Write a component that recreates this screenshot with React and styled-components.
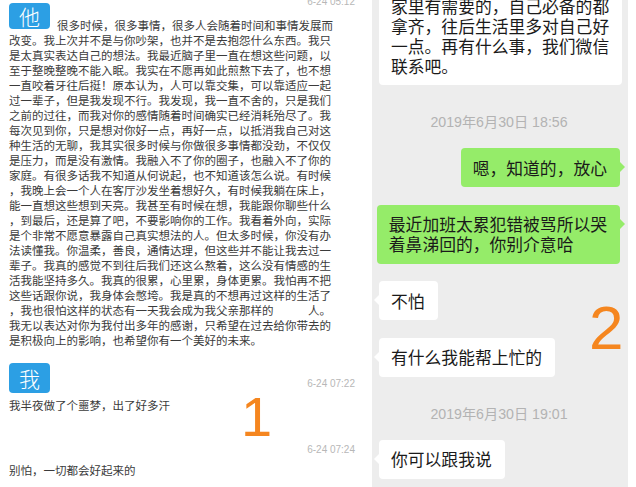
import React from "react";
import styled, { createGlobalStyle } from "styled-components";

const GlobalStyle = createGlobalStyle`
  html, body {
    margin: 0;
    padding: 0;
    background: #ffffff;
  }
`;

const letterLines = [
  "改变。我上次并不是与你吵架，也并不是去抱怨什么东西。我只",
  "是太真实表达自己的想法。我最近脑子里一直在想这些问题，以",
  "至于整晚整晚不能入眠。我实在不愿再如此煎熬下去了，也不想",
  "一直咬着牙往后挺！原本认为，人可以靠交集，可以靠适应一起",
  "过一辈子，但是我发现不行。我发现，我一直不舍的，只是我们",
  "之前的过往，而我对你的感情随着时间确实已经消耗殆尽了。我",
  "每次见到你，只是想对你好一点，再好一点，以抵消我自己对这",
  "种生活的无聊，我其实很多时候与你做很多事情都没劲，不仅仅",
  "是压力，而是没有激情。我融入不了你的圈子，也融入不了你的",
  "家庭。有很多话我不知道从何说起，也不知道该怎么说。有时候",
  "，我晚上会一个人在客厅沙发坐着想好久，有时候我躺在床上，",
  "能一直想这些想到天亮。我甚至有时候在想，我能跟你聊些什么",
  "，到最后，还是算了吧，不要影响你的工作。我看着外向，实际",
  "是个非常不愿意暴露自己真实想法的人。但太多时候，你没有办",
  "法读懂我。你温柔，善良，通情达理，但这些并不能让我去过一",
  "辈子。我真的感觉不到往后我们还这么熬着，这么没有情感的生",
  "活我能坚持多久。我真的很累，心里累，身体更累。我怕再不把",
  "这些话跟你说，我身体会憋垮。我是真的不想再过这样的生活了",
  "，我也很怕这样的状态有一天我会成为我父亲那样的　　　人。",
  "我无以表达对你为我付出多年的感谢，只希望在过去给你带去的",
  "是积极向上的影响，也希望你有一个美好的未来。",
];

const chat = [
  { kind: "stamp", text: "2019年6月30日 18:56" },
  { kind: "me", lines: ["嗯，知道的，放心"] },
  { kind: "me", lines: ["最近加班太累犯错被骂所以哭", "着鼻涕回的，你别介意哈"] },
  { kind: "them", lines: ["不怕"] },
  { kind: "them", lines: ["有什么我能帮上忙的"] },
  { kind: "stamp", text: "2019年6月30日 19:01" },
  { kind: "them", lines: ["你可以跟我说"] },
];

function App() {
  return (
    <>
      <GlobalStyle />
      <Page>
        <LeftPane>
          <Head>
            <Avatar>他</Avatar>
            <HeadLine>很多时候，很多事情，很多人会随着时间和事情发展而</HeadLine>
            <TopStamp>6-24 05:12</TopStamp>
          </Head>
          {letterLines.map((l, i) => (
            <Line key={i}>{l}</Line>
          ))}
          <AvatarRow>
            <Avatar>我</Avatar>
            <Stamp>6-24 07:22</Stamp>
          </AvatarRow>
          <Line $gap="4.5px">我半夜做了个噩梦，出了好多汗</Line>
          <StampRow>
            <Stamp>6-24 07:24</Stamp>
          </StampRow>
          <Line $gap="8px">别怕，一切都会好起来的</Line>
          <Mark $left="241px" $top="389px" $size="56px">1</Mark>
        </LeftPane>

        <RightPane>
          <Bubble $side="left" $noTail $top="-14px">
            家里有需要的，自己必备的都
            <br />
            拿齐，往后生活里多对自己好
            <br />
            一点。再有什么事，我们微信
            <br />
            联系吧。
          </Bubble>
          {chat.map((m, i) =>
            m.kind === "stamp" ? (
              <ChatTime key={i}>{m.text}</ChatTime>
            ) : (
              <Bubble key={i} $side={m.kind === "me" ? "right" : "left"}>
                {m.lines.map((l, j) => (
                  <React.Fragment key={j}>
                    {j > 0 && <br />}
                    {l}
                  </React.Fragment>
                ))}
              </Bubble>
            )
          )}
          <Mark $left="217px" $top="297px" $size="62px">2</Mark>
        </RightPane>
        <Edge />
      </Page>
    </>
  );
}

export default App;

const Page = styled.div`
  display: flex;
  width: 636px;
  height: 487px;
  overflow: hidden;
  background: #ffffff;
  font-family: "Noto Sans CJK SC", "Noto Sans", sans-serif;
`;

const LeftPane = styled.div`
  position: relative;
  width: 372px;
  flex-shrink: 0;
  box-sizing: border-box;
  padding: 0 17px 0 9px;
  display: flex;
  flex-direction: column;
  color: #3b3b3b;
  font-size: 11.5px;
  line-height: 15px;
`;

const Head = styled.div`
  display: grid;
  grid-template-columns: 41px 1fr;
  grid-template-rows: auto;
  column-gap: 7px;
  align-items: end;
`;

const Avatar = styled.div`
  width: 41px;
  height: 26px;
  margin-top: 3px;
  margin-bottom: 3.5px;
  border-radius: 4px;
  background: #2c9fe4;
  color: #ffffff;
  font-size: 21px;
  line-height: 26px;
  font-weight: 300;
  text-align: center;
`;

const Line = styled.div`
  white-space: nowrap;
  margin-top: ${(p) => p.$gap || "0"};
`;

const HeadLine = styled(Line)`
  grid-column: 2;
  grid-row: 1;
`;

const Stamp = styled.div`
  font-family: "Liberation Sans", Arial, sans-serif;
  font-size: 10px;
  line-height: 10px;
  color: #b7b7b7;
`;

const TopStamp = styled(Stamp)`
  grid-column: 2;
  grid-row: 1;
  justify-self: end;
  align-self: start;
  margin-top: -3px;
`;

const AvatarRow = styled.div`
  display: flex;
  justify-content: space-between;
  align-items: flex-end;
  margin-top: 15.5px;

  ${Avatar} {
    margin: 0;
    height: 30px;
    line-height: 30px;
  }
  ${Stamp} {
    margin-bottom: 4px;
  }
`;

const StampRow = styled.div`
  display: flex;
  justify-content: flex-end;
  margin-top: 32px;
`;

const Mark = styled.div`
  position: absolute;
  left: ${(p) => p.$left};
  top: ${(p) => p.$top};
  font-family: "Liberation Sans", Arial, sans-serif;
  font-size: ${(p) => p.$size};
  line-height: 1;
  color: #f5861f;
  pointer-events: none;
`;

const RightPane = styled.div`
  position: relative;
  width: 256px;
  flex-shrink: 0;
  box-sizing: border-box;
  padding: 0 8px 0 6px;
  background: #ededed;
  display: flex;
  flex-direction: column;
  align-items: flex-start;
`;

const Bubble = styled.div`
  position: relative;
  align-self: ${(p) => (p.$side === "right" ? "flex-end" : "flex-start")};
  margin-top: ${(p) => p.$top || "0"};
  margin-bottom: 17.5px;
  margin-left: ${(p) => (p.$side === "right" ? "0" : "1px")};
  padding: 9.5px 13px 9.5px 12px;
  border-radius: 4px;
  background: ${(p) => (p.$side === "right" ? "#95ec69" : "#ffffff")};
  color: #1a1a1a;
  font-size: 16.8px;
  line-height: 20px;
  white-space: nowrap;

  &::before {
    content: "";
    display: ${(p) => (p.$noTail ? "none" : "block")};
    position: absolute;
    top: 14px;
    ${(p) => (p.$side === "right" ? "right: -5px;" : "left: -5px;")}
    border-top: 5px solid transparent;
    border-bottom: 5px solid transparent;
    ${(p) =>
      p.$side === "right"
        ? "border-left: 5px solid #95ec69;"
        : "border-right: 5px solid #ffffff;"}
  }
`;

const ChatTime = styled.div`
  align-self: center;
  margin: 9.5px 0 16px;
  font-family: "Liberation Sans", "Noto Sans CJK SC", sans-serif;
  font-size: 14.2px;
  line-height: 20px;
  color: #b3b3b3;
`;

const Edge = styled.div`
  flex: 1;
  background: #ffffff;
`;
